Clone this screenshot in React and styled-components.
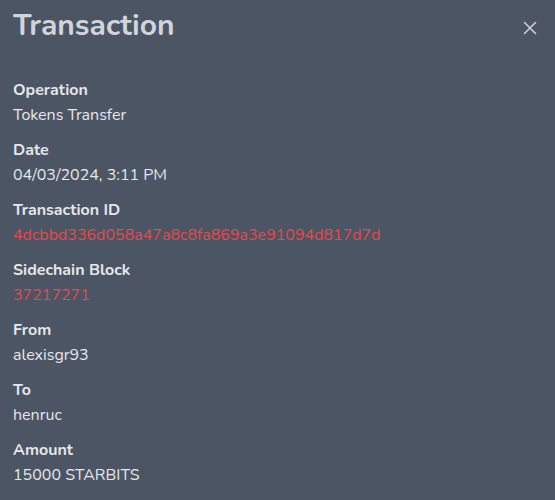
import React from "react";
import { styled, createGlobalStyle } from "styled-components";

const GlobalStyle = createGlobalStyle`
    html, body {
        margin: 0;
        padding: 0;
        background: #4b5563;
    }
    body {
        font-family: "Nunito", Lato, "Noto Sans", sans-serif;
    }
`;

const fields = [
    { label: "Operation", value: "Tokens Transfer" },
    { label: "Date", value: "04/03/2024, 3:11 PM" },
    { label: "Transaction ID", value: "4dcbbd336d058a47a8c8fa869a3e91094d817d7d", link: true },
    { label: "Sidechain Block", value: "37217271", link: true },
    { label: "From", value: "alexisgr93" },
    { label: "To", value: "henruc" },
    { label: "Amount", value: "15000 STARBITS" },
];

const App = () => {
    return (
        <Wrapper>
            <GlobalStyle />
            <Header>
                <Title>Transaction</Title>
                <CloseButton aria-label="close">
                    <svg width="14" height="14" viewBox="0 0 14 14" fill="none">
                        <path d="M1.5 1.5L12.5 12.5M12.5 1.5L1.5 12.5" stroke="#d1d5db" strokeWidth="1.5" strokeLinecap="round" />
                    </svg>
                </CloseButton>
            </Header>
            <List>
                {fields.map((f) => (
                    <Field key={f.label}>
                        <Label>{f.label}</Label>
                        <Value $link={f.link}>{f.value}</Value>
                    </Field>
                ))}
            </List>
        </Wrapper>
    );
};

const Wrapper = styled.div`
    width: 555px;
    height: 500px;
    box-sizing: border-box;
    padding: 8px 13px 0;
    background: #4b5563;
    overflow: hidden;
`;

const Header = styled.div`
    display: flex;
    align-items: center;
    justify-content: space-between;
    height: 36px;
`;

const Title = styled.h1`
    margin: 0;
    font-size: 30px;
    font-weight: 700;
    color: #d1d5db;
    line-height: 36px;
`;

const CloseButton = styled.button`
    display: flex;
    align-items: center;
    justify-content: center;
    width: 24px;
    height: 24px;
    margin-top: 4px;
    padding: 0;
    border: none;
    background: transparent;
    cursor: pointer;
`;

const List = styled.div`
    display: flex;
    flex-direction: column;
    gap: 14px;
    margin-top: 36px;
`;

const Field = styled.div`
    display: flex;
    flex-direction: column;
    gap: 5px;
`;

const Label = styled.div`
    font-size: 16px;
    font-weight: 700;
    color: #e5e7eb;
    line-height: 20px;
`;

const Value = styled.div`
    font-size: 16px;
    color: ${(p) => (p.$link ? "#e8474b" : "#e5e7eb")};
    line-height: 21px;
`;

export default App;
